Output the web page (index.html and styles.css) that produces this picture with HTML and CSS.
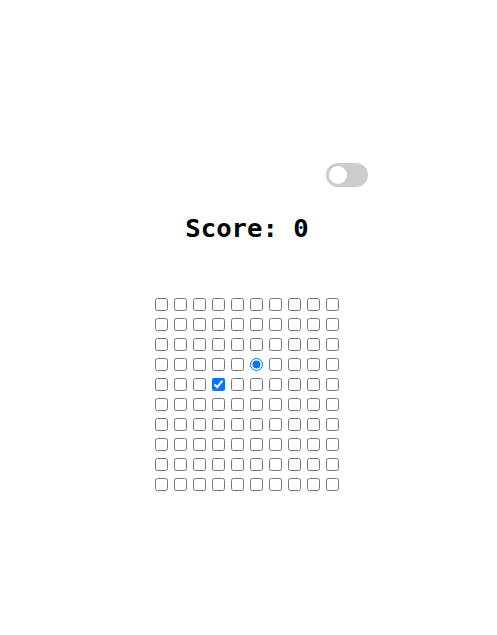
FILE: index.html
```html
<!DOCTYPE html>
<html>
<head>
<meta charset="utf-8">
<link rel="stylesheet" href="styles.css">
</head>
<body>
<div class="app">
  <div class="bar">
    <label class="switch"><input type="checkbox" class="switch-input"><span class="slider"></span></label>
  </div>
  <h1 class="score">Score: 0</h1>
  <div class="board" id="board"></div>
</div>
<script>
  var b = document.getElementById('board');
  for (var r = 0; r < 10; r++) {
    for (var c = 0; c < 10; c++) {
      var i = document.createElement('input');
      if (r === 3 && c === 5) { i.type = 'radio'; i.checked = true; }
      else { i.type = 'checkbox'; if (r === 4 && c === 3) i.checked = true; }
      i.className = 'cell';
      b.appendChild(i);
    }
  }
</script>
</body>
</html>
```
FILE: styles.css
```css
html, body { margin: 0; padding: 0; background: #fff; }
body { font-family: "DejaVu Sans", sans-serif; }
.app {
  display: flex;
  flex-direction: column;
  align-items: center;
  padding-top: 163px;
}
.bar {
  width: 240px;
  margin-right: 2px;
  display: flex;
  justify-content: flex-end;
}
.switch {
  position: relative;
  display: inline-block;
  width: 42px;
  height: 24px;
}
.switch-input { opacity: 0; width: 0; height: 0; margin: 0; }
.slider {
  position: absolute;
  inset: 0;
  background: #ccc;
  border-radius: 12px;
}
.slider::before {
  content: "";
  position: absolute;
  left: 3px;
  top: 3px;
  width: 18px;
  height: 18px;
  border-radius: 50%;
  background: #fff;
}
.score {
  font-family: "DejaVu Sans Mono", monospace;
  font-size: 25.6px;
  font-weight: bold;
  margin: 26px 3px 0 0;
  color: #000;
}
.board {
  margin-top: 55px;
  margin-right: 3px;
  display: grid;
  grid-template-columns: repeat(10, 13px);
  column-gap: 6px;
  row-gap: 7px;
}
.cell { margin: 0; width: 13px; height: 13px; }
```
